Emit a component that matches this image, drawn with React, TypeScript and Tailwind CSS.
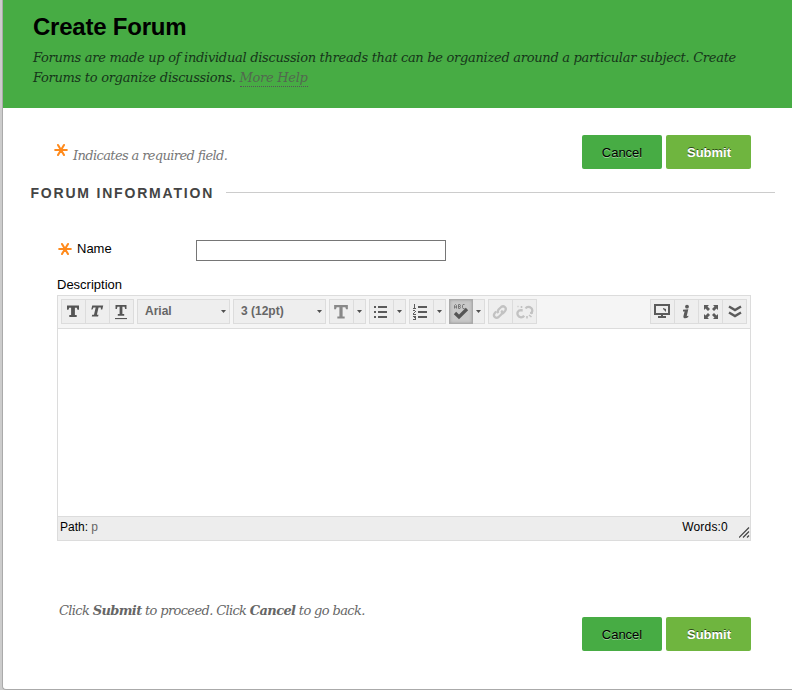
import React from "react";

const serif = "font-['DejaVu_Serif',Georgia,serif] italic";

function Asterisk() {
  return (
    <svg width="14" height="14" viewBox="0 0 14 14" className="shrink-0" stroke="#ff8a1c" strokeWidth="2.1" strokeLinecap="round">
      <path d="M1.2 7H12.8M4 2L10 12M10 2L4 12" />
    </svg>
  );
}

function Buttons() {
  return (
    <div className="flex gap-1 text-[13px]">
      <button className="h-[34px] w-20 rounded-[2px] bg-[#47ac44] pt-px text-black [text-shadow:0_1px_0_rgba(255,255,255,0.45)]">Cancel</button>
      <button className="h-[34px] w-[85px] rounded-[2px] bg-[#6fb53f] pt-px pl-px font-bold text-white [text-shadow:0_-1px_0_rgba(0,0,0,0.6)]">Submit</button>
    </div>
  );
}

function Group({ children, className = "" }: { children: React.ReactNode; className?: string }) {
  return <div className={`flex h-[25px] divide-x divide-[#dcdcdc] border border-[#dcdcdc] bg-[#eee] ${className}`}>{children}</div>;
}

function Cell({ children, className = "w-6 pr-px" }: { children: React.ReactNode; className?: string }) {
  return <button className={`flex h-[23px] shrink-0 items-center justify-center text-[#606060] ${className}`}>{children}</button>;
}

function Caret() {
  return <svg width="5" height="3" viewBox="0 0 5 3" fill="#505050"><path d="M0 0H5L2.5 3Z" /></svg>;
}

function Arrow() {
  return <Cell className="w-3 pr-px"><Caret /></Cell>;
}

function Select({ label }: { label: string }) {
  return (
    <Group className="w-[93px]">
      <button className="flex w-full items-center justify-between pr-[3px] pl-[7px] text-[12px] font-bold text-[#666]">
        <span className="-mt-0.5">{label}</span>
        <Caret />
      </button>
    </Group>
  );
}

function LetterT({ fill = "#555", italic = false, underline = false, light = false }: { fill?: string; italic?: boolean; underline?: boolean; light?: boolean }) {
  const size = light ? 16 : 14;
  return (
    <svg width={size} height="16" viewBox="0 0 14 16" preserveAspectRatio="none" fill={fill}>
      <path
        transform={italic ? "translate(.8 -1) skewX(-13)" : undefined}
        d={
          light
            ? "M1 1H13V5.2H11.4L10.8 3.3H8.4V12.5H10.2V14.5H3.8V12.5H5.6V3.3H3.2L2.6 5.2H1Z"
            : underline
              ? "M1.5 1H12.5V5H11.1L10.6 2.8H8.4V10H10.2V11.8H3.8V10H5.6V2.8H3.4L2.9 5H1.5Z"
              : italic
                ? "M2 2.5H13V6.5H11.6L11.1 4.5H8.8V11.7H10.4V13.5H4.1V11.7H5.9V4.5H3.7L3.2 6.5H2Z"
                : "M1 1.5H13V5.8H11.5L10.8 3.7H8.9V10.9H10.7V13H3.3V10.9H5.1V3.7H3.2L2.5 5.8H1Z"
        }
      />
      {underline && <path d="M1 14H13V15.1H1Z" />}
    </svg>
  );
}

function ListIcon({ numbered = false }: { numbered?: boolean }) {
  return (
    <svg width="16" height="16" viewBox="0 0 16 16" fill="#5b5b5b" className={numbered ? "mr-[3px]" : "mr-px"} shapeRendering="crispEdges">
      {numbered ? (
        <path d="M2 0H3V4H4V5H1V4H2V1H1ZM1 6H3V7H4V8H3V9H2V10H4V11H1V9H2V8H3V7H1ZM1 12H4V16H1V15H3V14H2V13H1Z" />
      ) : (
        <path d="M1 2H3V4H1ZM1 7H3V9H1ZM1 12H3V14H1Z" />
      )}
      <path d={numbered ? "M6 2H15V4H6ZM6 7H15V9H6ZM6 12H15V14H6Z" : "M5 2H14V4H5ZM5 7H14V9H5ZM5 12H14V14H5Z"} />
    </svg>
  );
}

function LinkIcon({ broken = false }: { broken?: boolean }) {
  return (
    <svg width="18" height="16" viewBox="0 0 18 16" fill="none" stroke="#c2c2c2" strokeWidth="2">
      {broken ? (
        <>
          <path d="M6.7 6.5L5 6.2C2 6.2.6 9 2 11.4C3.3 13.9 6.5 14 8.2 11.8M9.6 4.5C11 2.3 13.4 2.4 15.2 4C16.8 5.7 16.7 8 14.6 9.7" strokeWidth="2.3" />
          <path d="M1.5 2.5H2.5M5.5 2V4M13 11L15.5 13M11 12V14.5M14 9H17" strokeWidth="1.6" />
        </>
      ) : (
        <path strokeWidth="2.3" d="M7.5 9C6.4 7.8 6.7 6.5 7.8 5.2L10.2 3C12.8.9 16.1 4 14.2 6.7L12.3 9C11.5 9.8 10.7 10 9.7 9.8M10.2 6.7C11.4 7.8 11.3 9.3 10.2 10.5L7.6 13C5 15.2 1.6 12.2 3.6 9.4L5.2 7.4" />
      )}
    </svg>
  );
}

function SpellIcon() {
  return (
    <svg width="18" height="20" viewBox="0 0 18 20" fill="none">
      <path d="M2.5 6.5V3.5L3.5 2.5L4.5 3.5V6.5M2.5 5H4.5M6.5 2.5V6.5H8L8.5 5.5L8 4.5H6.5M6.5 2.5H8L8.5 3.5L8 4.5M12.5 2.5H11L10.5 3.5V5.5L11 6.5H12.5" stroke="#777" strokeWidth="1" />
      <path d="M3 11L7 15L15 7" stroke="#555" strokeWidth="3.3" />
    </svg>
  );
}

function Toolbar() {
  return (
    <div className="flex h-[33px] gap-[3px] border-b border-[#dcdcdc] bg-[#f5f5f5] px-[3px] pt-[3px]">
      <Group className="w-[73px]">
        <Cell><LetterT /></Cell>
        <Cell><LetterT italic /></Cell>
        <Cell className="w-[23px] pr-px"><LetterT underline /></Cell>
      </Group>
      <Select label="Arial" />
      <Select label="3 (12pt)" />
      <Group className="w-[37px]"><Cell><LetterT light fill="#888" /></Cell><Arrow /></Group>
      <Group className="w-[37px]"><Cell><ListIcon /></Cell><Arrow /></Group>
      <Group className="w-[37px]"><Cell><ListIcon numbered /></Cell><Arrow /></Group>
      <Group className="w-9">
        <Cell className="-m-px h-[25px]! w-6 border border-[#aaa]! bg-[#c9c9c9] shadow-[inset_0_0_3px_#999]"><SpellIcon /></Cell>
        <Cell className="w-3"><Caret /></Cell>
      </Group>
      <Group className="w-[49px]">
        <Cell><LinkIcon /></Cell>
        <Cell className="w-[23px]"><LinkIcon broken /></Cell>
      </Group>
      <Group className="ml-auto w-[97px]">
        <Cell>
          <svg width="16" height="16" viewBox="0 0 16 16" fill="none" stroke="#5b5b5b" className="mr-px">
            <path d="M1 1H15V10H1Z" strokeWidth="2" /><path d="M7 11H9V12H12V14H4V12H7Z" fill="#5b5b5b" stroke="none" /><path d="M9 4L12 5V8L9 5Z" fill="#5b5b5b" stroke="none" />
          </svg>
        </Cell>
        <Cell>
          <svg width="10" height="16" viewBox="0 0 10 16" fill="#5b5b5b"><circle cx="6" cy="2.7" r="1.9" /><path d="M2 5.7L7.3 5.2L5.7 12.2L7.3 11.8V13C5 15 2 14.8 2.4 12.3L3.6 7.5H2Z" /></svg>
        </Cell>
        <Cell className="w-6">
          <svg width="16" height="16" viewBox="0 0 16 16" fill="#5b5b5b">
            <path d="M1 1H6L4.5 2.5L7 5L5 7L2.5 4.5L1 6ZM15 1V6L13.5 4.5L11 7L9 5L11.5 2.5L10 1ZM1 15V10L2.5 11.5L5 9L7 11L4.5 13.5L6 15ZM15 15H10L11.5 13.5L9 11L11 9L13.5 11.5L15 10Z" />
          </svg>
        </Cell>
        <Cell className="w-[23px]">
          <svg width="14" height="14" viewBox="0 0 14 14" fill="none" stroke="#5b5b5b" strokeWidth="2.4"><path d="M1 1.5L7 5L13 1.5M1 7.5L7 11L13 7.5" /></svg>
        </Cell>
      </Group>
    </div>
  );
}

export default function App() {
  return (
    <div className="h-[690px] w-[792px] overflow-hidden bg-[#ccc] pl-[2px] font-['Liberation_Sans',Arial,sans-serif] text-[13px] text-black">
      <main className="flex h-[690px] flex-col rounded-bl-[4px] border-b border-l border-[#aaa] bg-white">
        <header className="h-[108px] bg-[#47ac44] pt-3 pl-[30px]">
          <h1 className="text-2xl leading-[30px] font-bold tracking-[-0.22px]">Create Forum</h1>
          <p className={`${serif} mt-[6px] text-[13px] leading-5 tracking-[-0.29px] whitespace-nowrap text-[#16351a]`}>
            Forums are made up of individual discussion threads that can be organized around a particular subject. Create
            <br />
            Forums to organize discussions.{" "}
            <a className="inline-block h-[19px] border-b border-dotted border-[#555] leading-5 text-[#52694f]">More Help</a>
          </p>
        </header>
        <div className="mt-[27px] flex h-[34px] justify-between pr-[41px] pl-[51px]">
          <p className={`${serif} flex gap-[6px] text-[13px] tracking-[-0.62px] text-[#777]`}>
            <span className="pt-[8px]"><Asterisk /></span>
            <span className="-ml-px pt-[11px] leading-5">Indicates a required field.</span>
          </p>
          <Buttons />
        </div>
        <div className="mt-[15px] flex h-4 items-center gap-3 pr-[17px] pl-[27px]">
          <h2 className="w-[184px] pt-px pl-[0.5px] text-[14px] leading-4 font-bold tracking-[1.8px] whitespace-nowrap text-[#444]">FORUM INFORMATION</h2>
          <div className="h-px grow bg-[#ccc]" />
        </div>
        <div className="mt-[40px] flex h-[21px] items-center pl-[54px]">
          <span className="-mt-[4px] ml-px"><Asterisk /></span>
          <label className="ml-[5px] w-[119px] pb-1">Name</label>
          <input className="h-[21px] w-[250px] border border-[#767676] bg-white" />
        </div>
        <div className="mt-4 h-[18px] pl-[54px] leading-[15px]">Description</div>
        <section className="ml-[54px] flex h-[246px] w-[694px] flex-col border border-[#dcdcdc]">
          <Toolbar />
          <div className="grow bg-white" />
          <div className="flex h-[24px] justify-between border-t border-[#dcdcdc] bg-[#ededed] pt-[3px] pl-[2px] text-[12px] leading-[14px]">
            <span>Path: <span className="text-[#666]">p</span></span>
            <div className="flex gap-[11px]">
              <span className="tracking-[0.2px]">Words:0</span>
              <svg width="11" height="11" viewBox="0 0 11 11" className="mt-[7px]" stroke="#444" strokeWidth="1.2"><path d="M0 10.5L10 .5M4 10.5L10 4.5M8 10.5L10 8.5" /></svg>
            </div>
          </div>
        </section>
        <p className={`${serif} mt-[60px] pl-[56px] text-[13px] leading-5 tracking-[-0.64px] text-[#666]`}>
          Click <b>Submit</b> to proceed. Click <b>Cancel</b> to go back.
        </p>
        <div className="-mt-[4px] flex justify-end pr-[41px]"><Buttons /></div>
      </main>
    </div>
  );
}
